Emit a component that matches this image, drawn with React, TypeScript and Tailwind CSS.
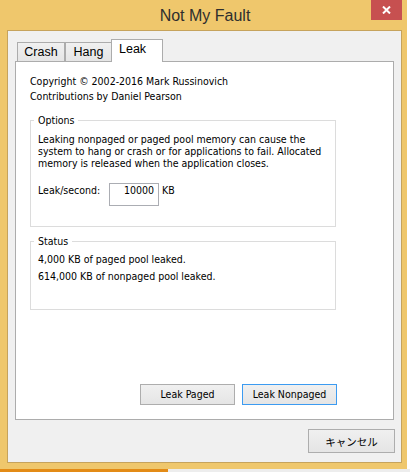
const Tab = ({ label, active, className }: { label: string; active?: boolean; className: string }) => {
    if (active) {
        return (
            <div className={`relative z-10 -mb-px h-[23px] border border-b-0 border-[#ACACAC] bg-white pt-[2px] pl-[7px] font-['Liberation_Sans',sans-serif] text-[12.5px] leading-[15px] ${className}`}>
                {label}
            </div>
        );
    }
    return (
        <div className={`h-[19px] border border-b-0 border-[#ACACAC] bg-gradient-to-b from-[#F0F0F0] to-[#E5E5E5] pt-[2px] text-center font-['Liberation_Sans',sans-serif] text-[12.5px] leading-[15px] ${className}`}>
            {label}
        </div>
    );
};

const GroupBox = ({ title, className, children }: { title: string; className: string; children: React.ReactNode }) => (
    <div className={`w-[306px] border border-[#DCDCDC] ${className}`}>
        <div className="-mt-[7px] ml-[3px] w-fit bg-white px-[4px] leading-[13px]">{title}</div>
        {children}
    </div>
);

const Button = ({ label, focused }: { label: string; focused?: boolean }) => (
    <div
        className={`flex h-[21px] w-[95px] items-center justify-center border bg-gradient-to-b from-[#F0F0F0] to-[#E5E5E5] leading-[13px] ${
            focused ? 'border-[#3C9BF1]' : 'border-[#ADADAD]'
        }`}
    >
        {label}
    </div>
);

export default function App() {
    return (
        <div className="flex h-[472px] w-[410px] flex-col overflow-hidden bg-white font-['DejaVu_Sans_Condensed','Liberation_Sans','Noto_Sans_CJK_JP',sans-serif] text-[10.5px] text-black">
            {/* window frame */}
            <div className="h-[469px] w-[407px] bg-[#EFC76C]">
                {/* title bar */}
                <div className="flex h-[30px]">
                    <div className="w-[39px]" />
                    <div className="flex-1 pt-[6px] text-center font-['Liberation_Sans',sans-serif] text-[16px] leading-[20px] text-[#2E2E2E]">Not My Fault</div>
                    <div className="flex h-[20px] w-[31px] items-center justify-center bg-[#C75050]">
                        <svg viewBox="0 0 9 8" className="h-[8px] w-[9px]">
                            <path d="M1 0.5 L8 7.5 M8 0.5 L1 7.5" stroke="white" strokeWidth="2" fill="none" />
                        </svg>
                    </div>
                    <div className="w-[5px]" />
                </div>

                {/* client area */}
                <div className="ml-[7px] flex h-[433px] w-[395px] flex-col border border-[#C6A35C] bg-[#F0F0F0] px-[7px] pt-[8px]">
                    <div className="flex h-[22px] items-end pl-[2px]">
                        <Tab label="Crash" className="w-[48px]" />
                        <Tab label="Hang" className="w-[47px]" />
                        <Tab label="Leak" active className="-ml-px w-[52px]" />
                    </div>

                    <div className="flex h-[359px] flex-col border border-[#ACACAC] bg-white pt-[12px] pl-[14px]">
                        <div className="leading-[15px]">Copyright © 2002-2016 Mark Russinovich</div>
                        <div className="leading-[15px]">Contributions by Daniel Pearson</div>

                        <GroupBox title="Options" className="mt-[16px] h-[107px]">
                            <p className="mt-[6px] ml-[7px] leading-[12px]">
                                Leaking nonpaged or paged pool memory can cause the
                                <br />
                                system to hang or crash or for applications to fail. Allocated
                                <br />
                                memory is released when the application closes.
                            </p>
                            <div className="mt-[14px] ml-[7px] flex items-start">
                                <span className="mt-[1px] w-[71px] leading-[13px]">Leak/second:</span>
                                <div className="h-[23px] w-[50px] border border-[#ABADB3] pr-[4px] text-right leading-[13px]">10000</div>
                                <span className="mt-[1px] ml-[3px] leading-[13px]">KB</span>
                            </div>
                        </GroupBox>

                        <GroupBox title="Status" className="mt-[14px] h-[69px]">
                            <div className="mt-[5px] ml-[7px] leading-[13px]">4,000 KB of paged pool leaked.</div>
                            <div className="mt-[4px] ml-[7px] leading-[13px]">614,000 KB of nonpaged pool leaked.</div>
                        </GroupBox>

                        <div className="mt-auto mb-[14px] ml-[110px] flex gap-[7px]">
                            <Button label="Leak Paged" />
                            <Button label="Leak Nonpaged" focused />
                        </div>
                    </div>

                    <div className="-mr-px mt-[9px] flex justify-end">
                        <div className="flex h-[24px] w-[87px] items-center justify-center border border-[#ADADAD] bg-gradient-to-b from-[#F0F0F0] to-[#E5E5E5] font-['Noto_Sans_CJK_JP',sans-serif] text-[10.5px] leading-[13px]">
                            キャンセル
                        </div>
                    </div>
                </div>
            </div>

            {/* taskbar edge below window */}
            <div className="flex h-[3px]">
                <div className="w-[168px] bg-[#E38B16]" />
                <div className="flex-1 bg-[#EDEDED]" />
            </div>
        </div>
    );
}
